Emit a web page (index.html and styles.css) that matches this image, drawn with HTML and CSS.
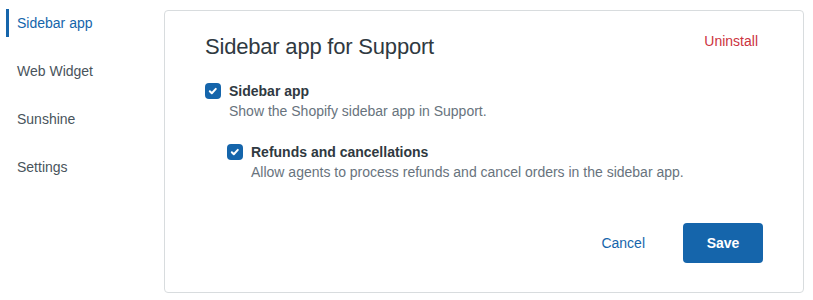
FILE: index.html
```html
<!DOCTYPE html>
<html>
<head>
<meta charset="utf-8">
<link rel="stylesheet" href="styles.css">
</head>
<body>
<div class="layout">
  <nav class="nav">
    <a class="nav-item active">Sidebar app</a>
    <a class="nav-item">Web Widget</a>
    <a class="nav-item">Sunshine</a>
    <a class="nav-item">Settings</a>
  </nav>
  <section class="card">
    <div class="card-head">
      <h1 class="title">Sidebar app for Support</h1>
      <a class="uninstall">Uninstall</a>
    </div>
    <div class="field">
      <span class="check"><svg viewBox="0 0 16 16" width="16" height="16"><path d="M4.8 8.2l2 2 4-4.3" fill="none" stroke="#fff" stroke-width="2" stroke-linecap="round" stroke-linejoin="round"/></svg></span>
      <div class="field-text">
        <div class="label">Sidebar app</div>
        <div class="hint">Show the Shopify sidebar app in Support.</div>
      </div>
    </div>
    <div class="field nested">
      <span class="check"><svg viewBox="0 0 16 16" width="16" height="16"><path d="M4.8 8.2l2 2 4-4.3" fill="none" stroke="#fff" stroke-width="2" stroke-linecap="round" stroke-linejoin="round"/></svg></span>
      <div class="field-text">
        <div class="label">Refunds and cancellations</div>
        <div class="hint">Allow agents to process refunds and cancel orders in the sidebar app.</div>
      </div>
    </div>
    <div class="actions">
      <button class="btn-link">Cancel</button>
      <button class="btn-primary">Save</button>
    </div>
  </section>
</div>
</body>
</html>
```
FILE: styles.css
```css
* { box-sizing: border-box; }
html, body { margin: 0; padding: 0; background: #fff; }
body {
  font-family: "Liberation Sans", Arial, sans-serif;
  font-size: 14px;
  color: #2f3941;
}
.layout {
  display: flex;
  align-items: flex-start;
  padding-top: 9px;
}
.nav {
  width: 164px;
  flex: none;
  display: flex;
  flex-direction: column;
  gap: 20px;
  padding-left: 6px;
}
.nav-item {
  display: flex;
  align-items: center;
  height: 28px;
  padding-left: 8px;
  border-left: 3px solid transparent;
  color: #49545c;
  font-size: 14px;
}
.nav-item.active {
  border-left-color: #1565ab;
  color: #1565ab;
}
.card {
  margin-top: 1px;
  width: 640px;
  height: 283px;
  border: 1px solid #d8dcde;
  border-radius: 4px;
  padding: 20px 40px 0 40px;
  display: flex;
  flex-direction: column;
}
.card-head {
  display: flex;
  justify-content: space-between;
  align-items: flex-start;
}
.title {
  margin: 0;
  font-size: 22px;
  font-weight: 400;
  line-height: 32px;
  letter-spacing: -0.2px;
  color: #2f3941;
}
.uninstall {
  color: #cc3340;
  font-size: 14px;
  line-height: 20px;
  margin-right: 5px;
}
.field {
  display: flex;
  gap: 8px;
  margin-top: 18px;
}
.field.nested {
  margin-top: 21px;
  margin-left: 22px;
}
.check {
  flex: none;
  width: 16px;
  height: 16px;
  margin-top: 2px;
  border-radius: 4px;
  background: #1565ab;
  display: flex;
}
.label {
  font-weight: 700;
  line-height: 20px;
  color: #2f3941;
}
.hint {
  line-height: 20px;
  color: #68737d;
}
.actions {
  margin-top: auto;
  margin-bottom: 29px;
  display: flex;
  justify-content: flex-end;
  align-items: center;
  gap: 38px;
}
button { font-family: inherit; font-size: 14px; cursor: pointer; }
.btn-link {
  border: 0;
  background: none;
  color: #1565ab;
  padding: 0;
}
.btn-primary {
  width: 80px;
  height: 40px;
  border: 0;
  border-radius: 4px;
  background: #1565ab;
  color: #fff;
  font-weight: 700;
}
```
